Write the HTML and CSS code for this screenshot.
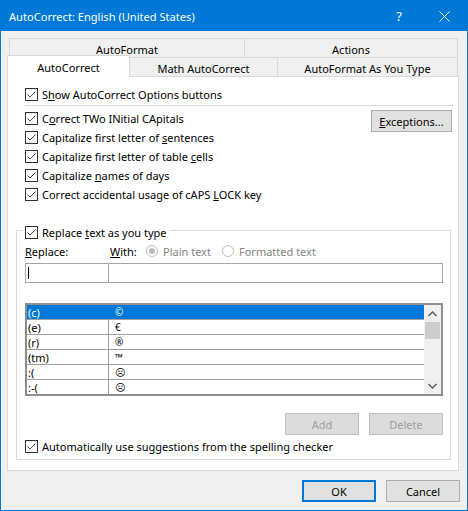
FILE: index.html
```html
<!DOCTYPE html>
<html>
<head>
<meta charset="utf-8">
<title>AutoCorrect</title>
<link rel="stylesheet" href="styles.css">
</head>
<body>
<div class="window">
  <div class="titlebar">
    <span class="title">AutoCorrect: English (United States)</span>
    <span class="capbtn help">?</span>
    <span class="capbtn close"><svg width="11" height="11" viewBox="0 0 11 11"><path d="M0.5 0.5L10.5 10.5M10.5 0.5L0.5 10.5" stroke="#fff" stroke-width="1" fill="none"/></svg></span>
  </div>
  <div class="client">
    <div class="tabrow back">
      <div class="tab t-autoformat">AutoFormat</div>
      <div class="tab t-actions">Actions</div>
    </div>
    <div class="tabrow front">
      <div class="tab selected">AutoCorrect</div>
      <div class="tab t-math">Math AutoCorrect</div>
      <div class="tab t-afayt">AutoFormat As You Type</div>
    </div>
    <div class="panel">
      <div class="row top-row">
        <svg class="cb" width="13" height="13" viewBox="0 0 13 13"><rect x="0.5" y="0.5" width="12" height="12" fill="#fff" stroke="#333"/><path d="M2.5 6.5L5 9L10.5 3.5" fill="none" stroke="#444"/></svg>
        <span>S<u>h</u>ow AutoCorrect Options buttons</span>
      </div>
      <div class="sep"></div>
      <div class="opts">
        <div class="optlist">
          <div class="row"><svg class="cb" width="13" height="13" viewBox="0 0 13 13"><rect x="0.5" y="0.5" width="12" height="12" fill="#fff" stroke="#333"/><path d="M2.5 6.5L5 9L10.5 3.5" fill="none" stroke="#444"/></svg><span>C<u>o</u>rrect TWo INitial CApitals</span></div>
          <div class="row"><svg class="cb" width="13" height="13" viewBox="0 0 13 13"><rect x="0.5" y="0.5" width="12" height="12" fill="#fff" stroke="#333"/><path d="M2.5 6.5L5 9L10.5 3.5" fill="none" stroke="#444"/></svg><span>Capitalize first letter of <u>s</u>entences</span></div>
          <div class="row"><svg class="cb" width="13" height="13" viewBox="0 0 13 13"><rect x="0.5" y="0.5" width="12" height="12" fill="#fff" stroke="#333"/><path d="M2.5 6.5L5 9L10.5 3.5" fill="none" stroke="#444"/></svg><span>Capitalize first letter of table <u>c</u>ells</span></div>
          <div class="row"><svg class="cb" width="13" height="13" viewBox="0 0 13 13"><rect x="0.5" y="0.5" width="12" height="12" fill="#fff" stroke="#333"/><path d="M2.5 6.5L5 9L10.5 3.5" fill="none" stroke="#444"/></svg><span>Capitalize <u>n</u>ames of days</span></div>
          <div class="row"><svg class="cb" width="13" height="13" viewBox="0 0 13 13"><rect x="0.5" y="0.5" width="12" height="12" fill="#fff" stroke="#333"/><path d="M2.5 6.5L5 9L10.5 3.5" fill="none" stroke="#444"/></svg><span>Correct accidental usage of cAPS <u>L</u>OCK key</span></div>
        </div>
        <div class="btn exceptions"><span><u>E</u>xceptions...</span></div>
      </div>
      <div class="group">
        <div class="legend">
          <svg class="cb" width="13" height="13" viewBox="0 0 13 13"><rect x="0.5" y="0.5" width="12" height="12" fill="#fff" stroke="#333"/><path d="M2.5 6.5L5 9L10.5 3.5" fill="none" stroke="#444"/></svg>
          <span>Replace <u>t</u>ext as you type</span>
        </div>
        <div class="labels">
          <span class="lbl-replace"><u>R</u>eplace:</span>
          <span class="lbl-with"><u>W</u>ith:</span>
          <span class="radio on"></span>
          <span class="rtext plain">Plain text</span>
          <span class="radio"></span>
          <span class="rtext">Formatted text</span>
        </div>
        <div class="inputs">
          <div class="field f-replace"><span class="caret"></span></div>
          <div class="field f-with"></div>
        </div>
        <div class="list">
          <div class="rows">
            <div class="lrow sel"><span class="c1">(c)</span><span class="c2">©</span></div>
            <div class="lrow"><span class="c1">(e)</span><span class="c2">€</span></div>
            <div class="lrow"><span class="c1">(r)</span><span class="c2">®</span></div>
            <div class="lrow"><span class="c1">(tm)</span><span class="c2">™</span></div>
            <div class="lrow"><span class="c1">:(</span><span class="c2">☹</span></div>
            <div class="lrow"><span class="c1">:-(</span><span class="c2">☹</span></div>
          </div>
          <div class="vscroll">
            <div class="sarrow"><svg width="9" height="6" viewBox="0 0 9 6"><path d="M0.5 5L4.5 1L8.5 5" fill="none" stroke="#606060" stroke-width="1.5"/></svg></div>
            <div class="thumb"></div>
            <div class="strack"></div>
            <div class="sarrow"><svg width="9" height="6" viewBox="0 0 9 6"><path d="M0.5 1L4.5 5L8.5 1" fill="none" stroke="#606060" stroke-width="1.5"/></svg></div>
          </div>
        </div>
        <div class="listbtns">
          <div class="btn disabled">Add</div>
          <div class="btn disabled">Delete</div>
        </div>
        <div class="row bottom-row">
          <svg class="cb" width="13" height="13" viewBox="0 0 13 13"><rect x="0.5" y="0.5" width="12" height="12" fill="#fff" stroke="#333"/><path d="M2.5 6.5L5 9L10.5 3.5" fill="none" stroke="#444"/></svg>
          <span>Automatically use su<u>g</u>gestions from the spelling checker</span>
        </div>
      </div>
    </div>
    <div class="footer">
      <div class="btn default">OK</div>
      <div class="btn">Cancel</div>
    </div>
  </div>
</div>
</body>
</html>
```

FILE: styles.css
```css
* { box-sizing: border-box; }
html, body { margin: 0; padding: 0; }
body {
  font-family: "Noto Sans", "DejaVu Sans", sans-serif;
  font-size: 11px;
  color: #000;
  width: 468px;
  height: 511px;
  overflow: hidden;
  background: #f0f0f0;
}
u { text-decoration: underline; text-underline-offset: 1px; }

.window {
  width: 468px;
  height: 511px;
  border: 1px solid #0078d7;
  background: #f0f0f0;
  display: flex;
  flex-direction: column;
}
.titlebar {
  flex: none;
  height: 30px;
  background: #0078d7;
  color: #fff;
  display: flex;
  align-items: center;
  padding-left: 8px;
}
.title { flex: 1; font-size: 11.1px; }
.capbtn {
  height: 30px;
  display: flex;
  align-items: center;
  justify-content: center;
}
.help { width: 46px; font-size: 13px; }
.close { width: 45px; }

.client {
  flex: 1;
  padding: 7px 0 0 6px;
  display: flex;
  flex-direction: column;
}
.tabrow {
  display: flex;
  align-items: flex-start;
  margin-left: 2px;
  height: 19px;
}
.tab {
  height: 19px;
  border: 1px solid #d9d9d9;
  border-bottom: none;
  background: #f0f0f0;
  display: flex;
  align-items: center;
  justify-content: center;
  padding-top: 2px;
  white-space: nowrap;
}
.tab + .tab { margin-left: -1px; }
.t-autoformat { width: 236px; }
.t-actions { width: 214px; }
.t-math { width: 149px; }
.t-afayt { width: 181px; }
.tab.selected {
  width: 123px;
  height: 22px;
  margin: -2px 0 -1px -2px;
  background: #fff;
  position: relative;
  z-index: 1;
  padding-top: 1px;
}

.panel {
  flex: none;
  width: 452px;
  height: 395px;
  border: 1px solid #d9d9d9;
  background: #fff;
  padding: 8px 0 0 8px;
  display: flex;
  flex-direction: column;
}
.row {
  height: 19px;
  display: flex;
  align-items: center;
  white-space: nowrap;
}
.cb { flex: none; margin-right: 4px; display: block; }
.top-row { margin-left: 9px; }
.sep {
  height: 1px;
  background: #dadada;
  margin: 1px 5px 3px 9px;
}
.opts {
  display: flex;
  justify-content: space-between;
  align-items: flex-start;
  margin: 0 6px 0 9px;
}
.btn {
  height: 22px;
  width: 74px;
  background: #e1e1e1;
  border: 1px solid #adadad;
  display: flex;
  align-items: center;
  justify-content: center;
  white-space: nowrap;
}
.exceptions { width: 81px; margin-top: 1px; }
.btn.disabled {
  background: #dcdcdc;
  border-color: #bfbfbf;
  color: #a0a0a0;
}

.group {
  margin: 26px 7px 0 0;
  border: 1px solid #dcdcdc;
  padding: 0 7px 3px 8px;
  display: flex;
  flex-direction: column;
}
.legend {
  display: flex;
  align-items: center;
  align-self: flex-start;
  height: 13px;
  margin: -5px 0 0 -3px;
  padding: 0 3px;
  background: #fff;
  white-space: nowrap;
}
.labels {
  height: 16px;
  margin-top: 4px;
  display: flex;
  align-items: center;
  white-space: nowrap;
}
.lbl-replace { width: 84px; }
.lbl-with { width: 37px; padding-left: 1px; }
.radio {
  flex: none;
  width: 12px;
  height: 12px;
  border: 1px solid #bcbcbc;
  border-radius: 50%;
  background: #fff;
  margin-right: 5px;
  display: flex;
  align-items: center;
  justify-content: center;
}
.radio.on::after {
  content: "";
  width: 6px;
  height: 6px;
  border-radius: 50%;
  background: #bcbcbc;
}
.rtext { color: #838383; }
.rtext.plain { width: 59px; }

.inputs {
  display: flex;
  height: 20px;
  margin-top: 4px;
}
.field {
  height: 20px;
  border: 1px solid #a5a5a5;
  background: #fff;
}
.f-replace { width: 84px; padding: 3px 0 0 2px; }
.f-with { flex: 1; margin-left: -1px; }
.caret {
  display: block;
  width: 1px;
  height: 12px;
  background: #000;
}

.list {
  margin-top: 20px;
  height: 93px;
  border: 2px solid #8e8e8e;
  display: flex;
  background: #fff;
}
.rows {
  flex: 1;
  height: 89px;
  overflow: hidden;
}
.lrow {
  height: 15px;
  border-bottom: 1px solid #a0a0a0;
  display: flex;
  align-items: center;
  white-space: nowrap;
}
.c1 {
  width: 81px;
  height: 14px;
  padding-left: 1px;
  display: flex;
  align-items: center;
}
.c2 {
  flex: 1;
  height: 14px;
  border-left: 1px solid #a0a0a0;
  padding-left: 6px;
  display: flex;
  align-items: center;
  font-size: 10px;
}
.lrow.sel { background: #0078d7; color: #fff; }
.lrow.sel .c2 { border-left-color: #0078d7; }
.vscroll {
  flex: none;
  width: 17px;
  height: 89px;
  background: #f0f0f0;
  display: flex;
  flex-direction: column;
}
.sarrow {
  height: 17px;
  display: flex;
  align-items: center;
  justify-content: center;
}
.thumb {
  height: 17px;
  margin: 0 1px;
  background: #cdcdcd;
}
.strack { flex: 1; }

.listbtns {
  display: flex;
  justify-content: flex-end;
  gap: 10px;
  margin-top: 17px;
}
.bottom-row { margin-top: 2px; }

.footer {
  display: flex;
  justify-content: flex-end;
  gap: 10px;
  margin: 9px 7px 0 0;
}
.btn.default { border: 2px solid #0078d7; }
```
